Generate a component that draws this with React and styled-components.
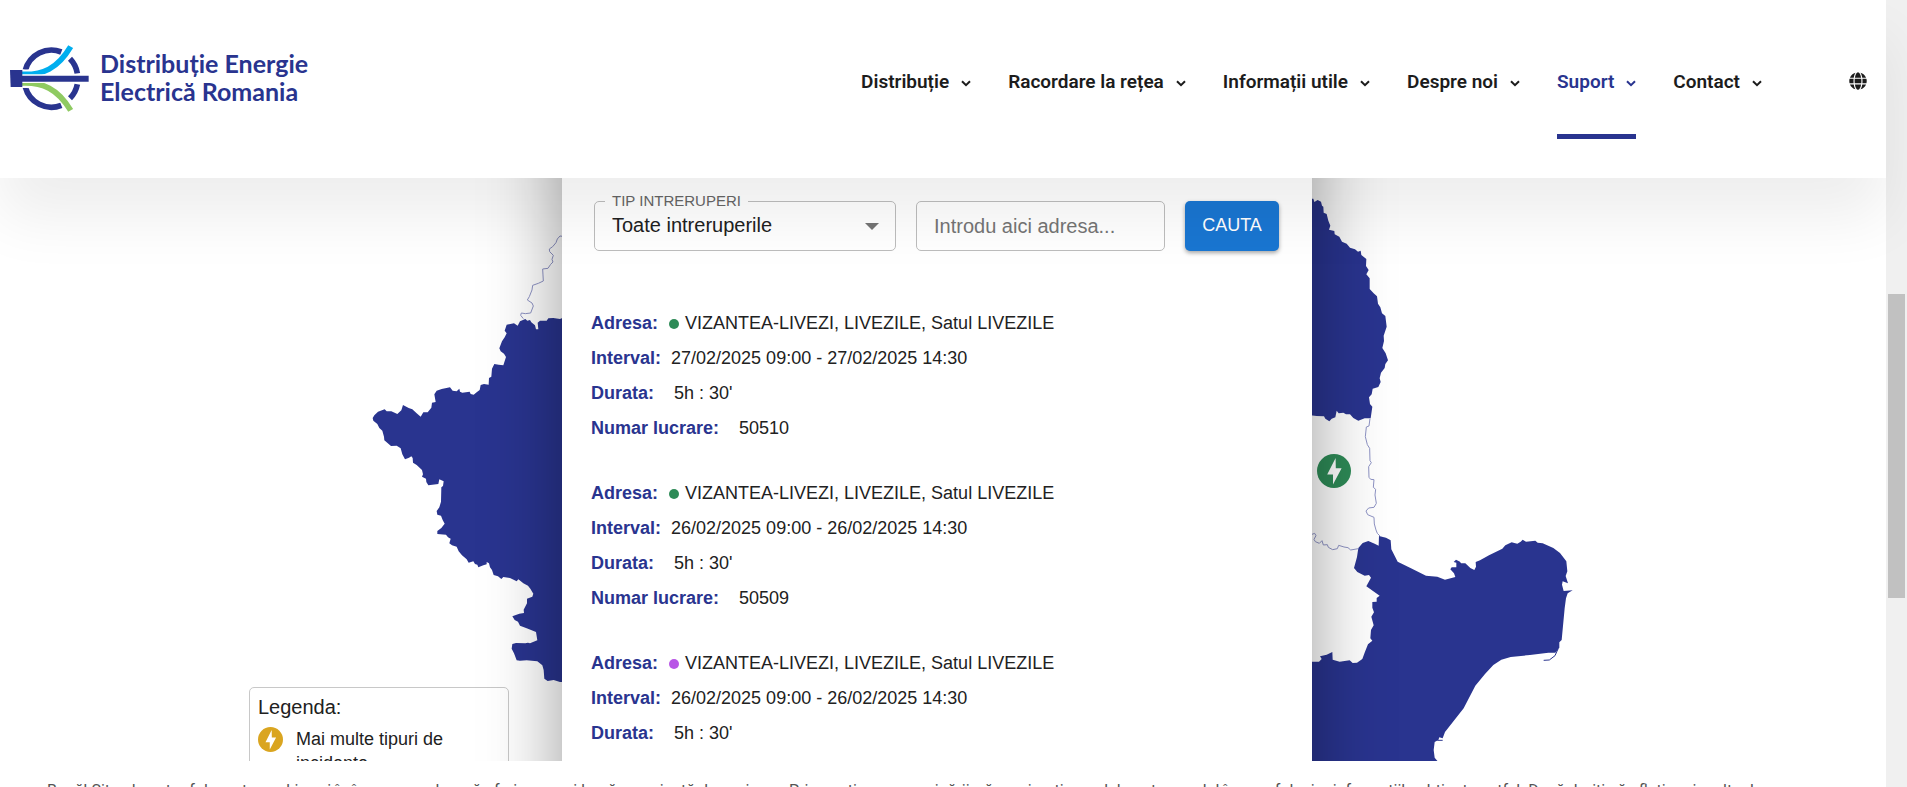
import styled, { createGlobalStyle } from "styled-components";
import { FaGlobe } from "react-icons/fa";

const GlobalStyle = createGlobalStyle`
    * {
        box-sizing: border-box;
    }
    body {
        margin: 0;
        overflow: hidden;
        background: #fff;
        color: #212121;
        font-family: "Liberation Sans", Arial, sans-serif;
    }
`

const Page = styled.div`
    display: flex;
    height: 100vh;
`

const Content = styled.div`
    flex: 1;
    min-width: 0;
    display: flex;
    flex-direction: column;
`

const Header = styled.header`
    position: relative;
    z-index: 2;
    flex: none;
    height: 178px;
    padding: 0 19px 0 10px;
    display: flex;
    align-items: flex-start;
    justify-content: space-between;
    background: #fff;
    box-shadow: 0 40px 60px rgba(0, 0, 0, 0.07);
`

const Logo = styled.a`
    display: flex;
    gap: 11px;
    padding-top: 44px;
    color: #29348f;
    text-decoration: none;
`

const LogoText = styled.span`
    padding-top: 5px;
    font: 700 25px/28px Lato, sans-serif;
`

const Nav = styled.nav`
    display: flex;
    gap: 37px;
    padding-top: 62px;
`

const NavLink = styled.a`
    height: 77px;
    display: flex;
    gap: 12px;
    color: ${({ $active }) => $active ? "#29348f" : "#1c1c1c"};
    border-bottom: 5px solid ${({ $active }) => $active ? "#29348f" : "transparent"};
    font: 600 19px/40px Roboto, sans-serif;
    text-decoration: none;
    svg {
        margin-top: 18px;
    }
`

const LangButton = styled.button`
    margin-left: 50px;
    padding: 0;
    height: 38px;
    border: 0;
    background: none;
    color: #1c1c1c;
    font-size: 18px;
    line-height: 0;
`

const Stage = styled.main`
    flex: 1;
    min-height: 0;
    display: grid;
    grid-template: minmax(0, 1fr) / minmax(0, 1fr);
    overflow: hidden;
    > * {
        grid-area: 1 / 1;
    }
`

const Map = styled.svg`
    width: 100%;
    height: 100%;
`

const Legend = styled.aside`
    width: 260px;
    height: 200px;
    margin: 509px 0 0 249px;
    padding: 3px 8px;
    background: #fff;
    border: 1px solid #c8c8c8;
    border-radius: 5px;
`

const LegendTitle = styled.h2`
    margin: 0;
    font-size: 20px;
    font-weight: 400;
    line-height: 32px;
`

const LegendItem = styled.div`
    display: flex;
    gap: 13px;
    padding-top: 4px;
    font-size: 18px;
    line-height: 24px;
    svg {
        flex: none;
    }
`

const ModalLayer = styled.div`
    display: flex;
    justify-content: center;
    align-items: flex-start;
    padding-right: 12px;
`

const Modal = styled.section`
    width: 750px;
    height: 1000px;
    margin-top: -150px;
    padding: 173px 33px 0 29px;
    background: #fff;
    box-shadow: 0 0 72px rgba(0, 0, 0, 0.4);
`

const SearchForm = styled.form`
    display: flex;
    gap: 20px;
    padding-left: 3px;
`

const SelectBox = styled.fieldset`
    position: relative;
    flex: 1;
    height: 58px;
    margin: -8px 0 0;
    padding: 0;
    border: 1px solid #bdbdbd;
    border-radius: 5px;
    min-width: 0;
    legend {
        margin-left: 10px;
        padding: 0 7px;
        color: #666;
        font-size: 15px;
        line-height: 16px;
    }
    svg {
        position: absolute;
        right: 16px;
        top: 14px;
        pointer-events: none;
    }
`

const Select = styled.select`
    appearance: none;
    width: 100%;
    height: 32px;
    padding: 0 17px;
    border: 0;
    background: transparent;
    color: #212121;
    font: 20px "Liberation Sans", Arial, sans-serif;
`

const AddressInput = styled.input`
    width: 249px;
    height: 50px;
    padding: 0 17px;
    border: 1px solid #bdbdbd;
    border-radius: 5px;
    background: transparent;
    font: 20px "Liberation Sans", Arial, sans-serif;
    &::placeholder {
        color: #757575;
        opacity: 1;
    }
`

const SearchButton = styled.button`
    width: 94px;
    height: 50px;
    padding: 0 0 2px;
    border: 0;
    border-radius: 5px;
    background: #1976d2;
    color: #fff;
    font: 18px "Liberation Sans", Arial, sans-serif;
    box-shadow: 0 2px 4px rgba(0, 0, 0, 0.35);
`

const Results = styled.div`
    display: flex;
    flex-direction: column;
    gap: 30px;
    padding-top: 55px;
`

const Outage = styled.dl`
    margin: 0;
`

const Row = styled.div`
    display: flex;
    align-items: center;
    gap: ${({ $gap }) => $gap}px;
    font-size: 18px;
    line-height: 35px;
    dt {
        color: #29348f;
        font-weight: 700;
    }
    dd {
        display: flex;
        align-items: center;
        gap: 6px;
        margin: 0;
    }
`

const Dot = styled.span`
    width: 10px;
    height: 10px;
    border-radius: 50%;
    background: ${({ $color }) => $color};
`

const CookieBar = styled.footer`
    flex: none;
    height: 26px;
    padding: 18px 47px 0;
    overflow: hidden;
    white-space: nowrap;
    color: #555;
    font: 16px/24px Roboto, sans-serif;
`

const Scrollbar = styled.div`
    flex: none;
    width: 21px;
    padding: 294px 2px 0;
    background: #f0f0f0;
`

const Thumb = styled.div`
    height: 304px;
    background: #c1c1c1;
`

const menu = ["Distribuție", "Racordare la rețea", "Informații utile", "Despre noi", "Suport", "Contact"]

const outages = [
    { id: 50510, color: "#2e8b57", interval: "27/02/2025 09:00 - 27/02/2025 14:30" },
    { id: 50509, color: "#2e8b57", interval: "26/02/2025 09:00 - 26/02/2025 14:30" },
    { id: 50508, color: "#b855e6", interval: "26/02/2025 09:00 - 26/02/2025 14:30" },
]

const Chevron = () => (
    <svg width="10" height="7" viewBox="0 0 10 7" fill="none" stroke="currentColor" strokeWidth="2">
        <path d="M1 1.2 5 5.2 9 1.2" />
    </svg>
)

const Bolt = ({ size, color, ...rest }) => (
    <svg width={size} height={size} viewBox="0 0 34 34" {...rest}>
        <circle cx="17" cy="17" r="17" fill={color} />
        <path d="M18.6 4 10.2 20.6H16V30.5L24.6 14.2H18.8Z" fill="#fff" />
    </svg>
)

const LogoMark = () => (
    <svg width="79" height="68" viewBox="0 0 237 204" fill="none">
        <g stroke="#29348f" strokeWidth="17">
            <path d="M46 79A81 81 0 0 1 154 24" />
            <path d="M180 44A81 81 0 0 1 202 88" />
            <path d="M202 121A81 81 0 0 1 180 163" />
            <path d="M46 129A81 81 0 0 0 154 184" />
        </g>
        <path d="M36 88C95 91 145 73 184 9" stroke="#fff" strokeWidth="24" />
        <path d="M36 120C95 117 145 135 184 199" stroke="#fff" strokeWidth="24" />
        <path d="M34 91C98 94 143 74 182 8" stroke="#00aeef" strokeWidth="17" />
        <path d="M34 117C98 114 143 134 182 199" stroke="#8fca62" strokeWidth="17" />
        <path d="M30 91H236V117H30Z" fill="#fff" />
        <path d="M30 95H236V113H30Z" fill="#29348f" />
        <path d="M0 78H37V129H2Z" fill="#29348f" />
    </svg>
)

const CountyMap = () => (
    <Map viewBox="0 178 1886 583" preserveAspectRatio="xMidYMid slice" aria-label="Harta intreruperilor">
        <g transform="translate(360 220) scale(.33333)">
            <path fill="#29348f" d="M660 294 607 294 600 297 580 294 565 295 560 302 540 302 533 308 535 328 528 328 525 316 514 307 510 300 502 302 496 297 480 304 473 317 462 310 440 314 434 332 440 340 434 352 426 364 418 385 422 394 432 401 438 411 430 436 416 434 403 432 396 446 394 470 387 474 386 494 372 492 362 495 359 510 350 517 341 524 332 522 329 515 307 518 300 515 298 506 290 514 278 512 270 502 245 507 230 512 223 523 227 546 216 548 214 563 203 577 190 577 182 590 170 580 157 568 146 564 129 555 124 571 112 582 94 574 80 574 74 568 54 575 43 586 38 594 40 602 52 612 58 624 67 632 72 650 73 661 93 678 110 677 122 685 127 703 135 718 147 713 154 709 158 714 159 728 170 735 186 750 189 763 186 770 198 776 199 786 205 796 235 792 238 778 251 784 249 798 244 802 243 845 238 862 230 873 232 884 243 887 248 900 254 911 244 924 232 933 232 942 258 944 264 952 272 956 268 970 276 976 290 980 296 994 306 1006 320 1018 326 1028 340 1024 345 1032 352 1034 355 1042 370 1036 380 1033 380 1026 387 1030 390 1042 396 1050 401 1065 414 1069 424 1077 430 1071 450 1074 470 1084 475 1078 490 1090 504 1097 511 1106 520 1121 517 1130 501 1136 501 1150 491 1169 492 1179 478 1181 457 1189 464 1200 474 1205 480 1217 500 1225 528 1236 532 1261 510 1270 504 1268 496 1270 468 1269 457 1272 455 1286 462 1300 470 1321 480 1322 500 1321 532 1324 547 1336 551 1350 553 1376 563 1383 581 1380 600 1386 660 1385Z" />
            <path fill="none" stroke="#8e93c4" strokeWidth="3" d="M607 49 600 48 592 57 588 68 578 80 568 87 569 95 580 106 576 118 579 126 572 133 564 145 548 147 549 165 550 183 535 190 518 196 516 210 508 230 502 240 516 249 520 258 512 279 496 281 484 279 482 286 490 296" />
        </g>
        <g transform="translate(1300 180) scale(.33333)">
            <path fill="#29348f" d="M0 56H40L43 66 53 60 63 65 66 77 70 80 71 98 80 102 85 122 91 137 87 149 103 153 104 163 118 170 126 185 140 191 150 203 165 208 174 215 182 212 184 225 199 237 198 258 206 270 199 283 209 295 209 327 221 340 231 349 234 371 241 382 246 400 256 408 260 440 251 467 252 483 247 504 257 520 264 541 256 552 254 564 243 578 239 595 242 606 235 621 218 626 215 643 207 652 210 672 217 680 212 715 194 715 175 722 160 714 150 703 138 703 130 698 116 700 110 692 106 712 95 716 88 724 76 716 72 709 50 708 0 702Z" />
            <path fill="#29348f" d="M0 1445H57L65 1437 60 1429 80 1424 97 1416 98 1439 119 1445 149 1441 158 1449 171 1448 187 1437 195 1415 204 1393 217 1382 211 1375 213 1350 221 1336 214 1310 222 1297 217 1283 217 1266 230 1265 230 1254 239 1247 199 1219 213 1193 207 1185 194 1187 172 1176 162 1164 171 1131 175 1104 188 1089 205 1083 224 1091 236 1097 237 1068 258 1073 272 1081 274 1108 293 1145 330 1163 378 1187 412 1190 435 1199 466 1191 462 1180 451 1168 455 1162 469 1162 469 1148 461 1146 468 1139 480 1145 483 1150 496 1150 511 1164 523 1170 528 1160 527 1146 540 1141 567 1126 607 1106 616 1096 635 1087 643 1089 652 1091 662 1085 668 1079 678 1085 706 1082 713 1088 728 1090 760 1104 780 1119 799 1144 802 1174 797 1188 804 1210 788 1204 786 1214 791 1233 818 1231 803 1240 798 1255 794 1285 785 1380 778 1387 778 1403 766 1418 745 1418 690 1425 632 1431 604 1439 580 1455 555 1482 526 1517 491 1585 435 1656 428 1675 418 1672 415 1680 404 1686 401 1710 404 1733 414 1745 0 1745Z" />
            <path fill="none" stroke="#29348f" strokeWidth="3" d="M774 1407 765 1427 748 1440 731 1441M412 1681H428" />
            <path fill="none" stroke="#8e93c4" strokeWidth="3" d="M210 716 207 738 199 741 196 770 202 794 209 805 210 842 214 848 206 860 207 892 212 898 222 899 220 922 227 928 225 945 229 970 222 982 206 984 198 993 203 1004 222 1012 223 1032 228 1050 232 1060 240 1068M36 1063 44 1060 48 1067 42 1078 46 1085 58 1090 66 1082 70 1095 82 1094 85 1102 98 1109 112 1106 116 1096 132 1101 144 1103 152 1110 175 1106" />
        </g>
        <Bolt x="1317" y="454" size="34" color="#2e8b57" />
    </Map>
)

const App = () => {
    return (
        <>
            <GlobalStyle />
            <Page>
                <Content>
                    <Header>
                        <Logo href="#">
                            <LogoMark />
                            <LogoText>Distribuție Energie<br />Electrică Romania</LogoText>
                        </Logo>
                        <Nav>
                            {menu.map(item => <NavLink
                                href="#"
                                key={item}
                                $active={item === "Suport"}
                            >
                                {item}
                                <Chevron />
                            </NavLink>)}
                            <LangButton aria-label="Limba"><FaGlobe /></LangButton>
                        </Nav>
                    </Header>
                    <Stage>
                        <CountyMap />
                        <Legend>
                            <LegendTitle>Legenda:</LegendTitle>
                            <LegendItem>
                                <Bolt size="25" color="#daa520" />
                                <span>Mai multe tipuri de incidente</span>
                            </LegendItem>
                        </Legend>
                        <ModalLayer>
                            <Modal>
                                <SearchForm>
                                    <SelectBox>
                                        <legend><label htmlFor="tip">TIP INTRERUPERI</label></legend>
                                        <Select id="tip">
                                            <option>Toate intreruperile</option>
                                        </Select>
                                        <svg width="14" height="7" viewBox="0 0 14 7"><path d="M0 0H14L7 7Z" fill="#757575" /></svg>
                                    </SelectBox>
                                    <AddressInput aria-label="Adresa" placeholder="Introdu aici adresa..." />
                                    <SearchButton type="button">CAUTA</SearchButton>
                                </SearchForm>
                                <Results>
                                    {outages.map(outage => <Outage key={outage.id}>
                                        <Row $gap={11}>
                                            <dt>Adresa:</dt>
                                            <dd><Dot $color={outage.color} />VIZANTEA-LIVEZI, LIVEZILE, Satul LIVEZILE</dd>
                                        </Row>
                                        <Row $gap={10}><dt>Interval:</dt><dd>{outage.interval}</dd></Row>
                                        <Row $gap={20}><dt>Durata:</dt><dd>5h : 30'</dd></Row>
                                        <Row $gap={20}><dt>Numar lucrare:</dt><dd>{outage.id}</dd></Row>
                                    </Outage>)}
                                </Results>
                            </Modal>
                        </ModalLayer>
                    </Stage>
                    <CookieBar>
                        Bună! Site-ul nostru folosește cookies și în încercarea de a vă oferi cea mai bună experiență de navigare. Prin continuarea navigării, vă exprimați acordul pentru modul în care folosim informațiile obținute astfel. Dacă doriți să aflați mai multe despre
                    </CookieBar>
                </Content>
                <Scrollbar><Thumb /></Scrollbar>
            </Page>
        </>
    )
}

export default App;
